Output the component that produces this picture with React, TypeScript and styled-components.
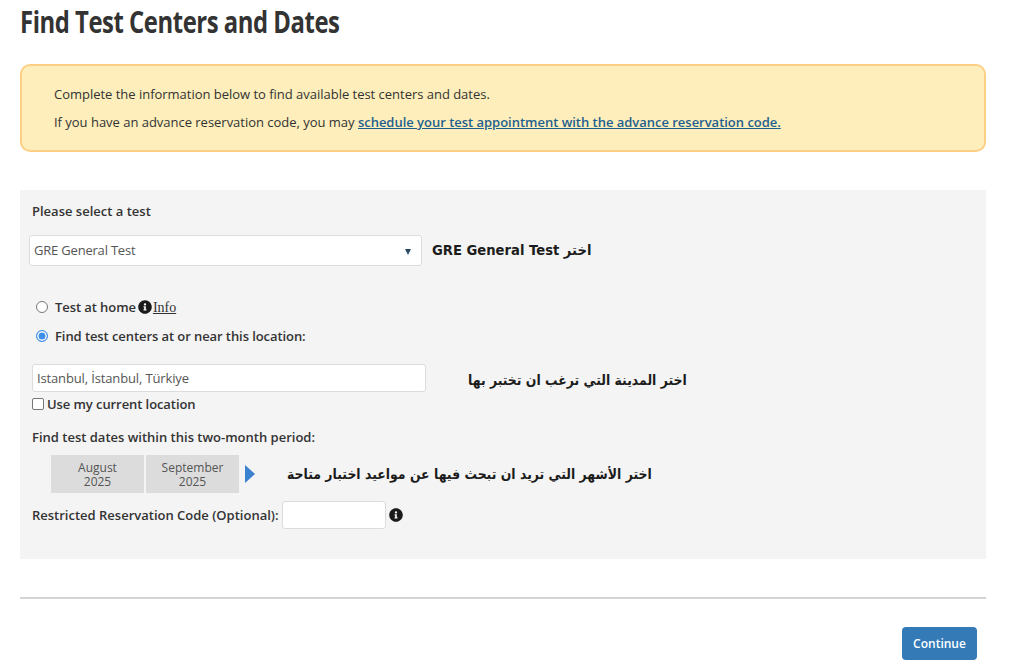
import React from "react";
import styled, { createGlobalStyle } from "styled-components";
import { FaInfoCircle } from "react-icons/fa";

const GlobalStyle = createGlobalStyle`
  html, body { margin: 0; padding: 0; background: #fff; }
  body { font-family: "Open Sans", "Noto Sans", sans-serif; color: #333; }
`;

const Page = styled.div`
  width: 966px;
  height: 667px;
  margin-left: 20px;
  overflow: hidden;
`;

const Title = styled.h1`
  margin: 0;
  height: 64px;
  box-sizing: border-box;
  font-size: 31px;
  line-height: 42px;
  font-weight: 700;
  letter-spacing: -0.6px;
  color: #333;
  transform: scaleX(0.77);
  transform-origin: left center;
  white-space: nowrap;
`;

const Notice = styled.div`
  box-sizing: border-box;
  height: 88px;
  padding: 19px 32px 0;
  background: #fdeebb;
  border: 2px solid #fdcf85;
  border-radius: 10px;
  font-size: 13px;
  line-height: 18px;
`;

const NoticeLine = styled.p`
  margin: 0 0 10px;
  letter-spacing: -0.02px;
`;

const NoticeLink = styled.a`
  color: #1f5f8f;
  font-weight: 600;
  text-decoration: underline;
`;

const Panel = styled.section`
  box-sizing: border-box;
  height: 369px;
  margin-top: 38px;
  padding: 12px 9px 0;
  background: #f4f4f4;
`;

const Label = styled.div<{ $top?: number }>`
  margin-top: ${(p) => p.$top ?? 0}px;
  padding-left: 3px;
  font-size: 13px;
  line-height: 18px;
  font-weight: 600;
  color: #333;
  white-space: nowrap;
`;

const Row = styled.div<{ $gap?: number; $top?: number }>`
  display: flex;
  align-items: center;
  gap: ${(p) => p.$gap ?? 0}px;
  margin-top: ${(p) => p.$top ?? 0}px;
`;

const SelectBox = styled.div`
  box-sizing: border-box;
  width: 393px;
  height: 31px;
  padding: 0 10px 2px 4px;
  display: flex;
  align-items: center;
  justify-content: space-between;
  background: #fff;
  border: 1px solid #dcdcdc;
  border-radius: 3px;
  font-size: 13px;
  letter-spacing: -0.2px;
  color: #555;
`;

const Caret = styled.span`
  width: 0;
  height: 0;
  margin-top: 4px;
  border-left: 3.5px solid transparent;
  border-right: 3.5px solid transparent;
  border-top: 6px solid #2b4a66;
`;

const Hint = styled.span<{ $offset?: number; $squeeze: number; $drop?: number }>`
  display: inline-block;
  margin-top: ${(p) => p.$drop ?? 0}px;
  margin-left: ${(p) => p.$offset ?? 0}px;
  font-family: "DejaVu Sans", "Noto Sans", sans-serif;
  font-size: 14px;
  font-weight: 600;
  color: #1c1c1c;
  white-space: nowrap;
  transform: scaleX(${(p) => p.$squeeze});
  transform-origin: left center;
`;

const RadioDot = styled.span<{ $on?: boolean }>`
  box-sizing: border-box;
  flex: none;
  width: 12px;
  height: 12px;
  margin-left: 7px;
  border-radius: 50%;
  background: ${(p) => (p.$on ? "#3f8fe8" : "#fff")};
  border: 1px solid ${(p) => (p.$on ? "#3f8fe8" : "#767676")};
  box-shadow: ${(p) => (p.$on ? "inset 0 0 0 1.5px #fff" : "none")};
`;

const OptionText = styled.span<{ $gap?: number }>`
  margin-left: ${(p) => p.$gap ?? 7}px;
  font-size: 13px;
  font-weight: 600;
  letter-spacing: -0.08px;
  color: #333;
`;

const InfoIcon = styled(FaInfoCircle)<{ $gap: number }>`
  flex: none;
  width: 14px;
  height: 14px;
  margin-left: ${(p) => p.$gap}px;
  color: #1a1a1a;
`;

const InfoLink = styled.a`
  margin-left: 1px;
  font-family: "Liberation Serif", serif;
  font-size: 14px;
  color: #333;
  text-decoration: underline;
  align-self: flex-end;
`;

const TextBox = styled.div<{ $width: number; $height: number; $indent?: number }>`
  box-sizing: border-box;
  width: ${(p) => p.$width}px;
  height: ${(p) => p.$height}px;
  margin-left: ${(p) => p.$indent ?? 0}px;
  padding-left: 4px;
  display: flex;
  align-items: center;
  flex: none;
  background: #fff;
  border: 1px solid #dcdcdc;
  border-radius: 3px;
  font-size: 13px;
  letter-spacing: -0.14px;
  color: #555;
`;

const CheckBox = styled.span`
  box-sizing: border-box;
  flex: none;
  width: 12px;
  height: 12px;
  margin-left: 3px;
  background: #fff;
  border: 1px solid #767676;
  border-radius: 2px;
`;

const Months = styled.div`
  display: flex;
  align-items: center;
  margin: 9px 0 0 22px;
`;

const Month = styled.div`
  box-sizing: border-box;
  width: 93px;
  height: 38px;
  margin-right: 2px;
  padding-top: 6px;
  background: #dcdcdc;
  text-align: center;
  font-size: 12px;
  line-height: 14px;
  color: #555;
`;

const MonthArrow = styled.span`
  width: 0;
  height: 0;
  margin-left: 4px;
  border-top: 9px solid transparent;
  border-bottom: 9px solid transparent;
  border-left: 10px solid #3a82d0;
`;

const Divider = styled.hr`
  margin: 38px 0 0;
  border: 0;
  border-top: 2px solid #d4d4d4;
`;

const Footer = styled.div`
  display: flex;
  justify-content: flex-end;
  padding: 28px 9px 0 0;
`;

const ContinueButton = styled.button`
  width: 75px;
  height: 33px;
  padding: 0;
  background: #337ab7;
  border: 0;
  border-radius: 4px;
  color: #fff;
  font-family: inherit;
  font-size: 12px;
  font-weight: 600;
`;

const App = () => (
  <Page>
    <GlobalStyle />
    <Title>Find Test Centers and Dates</Title>
    <Notice>
      <NoticeLine>Complete the information below to find available test centers and dates.</NoticeLine>
      <NoticeLine>
        If you have an advance reservation code, you may{" "}
        <NoticeLink>schedule your test appointment with the advance reservation code.</NoticeLink>
      </NoticeLine>
    </Notice>
    <Panel>
      <Label>Please select a test</Label>
      <Row $top={15}>
        <SelectBox>
          GRE General Test
          <Caret />
        </SelectBox>
        <Hint $offset={10} $squeeze={0.94} $drop={-2} dir="rtl">اختر GRE General Test</Hint>
      </Row>
      <Row $top={32}>
        <RadioDot />
        <OptionText>Test at home</OptionText>
        <InfoIcon $gap={2} />
        <InfoLink>Info</InfoLink>
      </Row>
      <Row $top={11}>
        <RadioDot $on />
        <OptionText>Find test centers at or near this location:</OptionText>
      </Row>
      <Row $top={19}>
        <TextBox $width={394} $height={28} $indent={3}>Istanbul, İstanbul, Türkiye</TextBox>
        <Hint $offset={42} $squeeze={0.89} $drop={4} dir="rtl">اختر المدينة التي ترغب ان تختبر بها</Hint>
      </Row>
      <Row $top={3}>
        <CheckBox />
        <OptionText $gap={3}>Use my current location</OptionText>
      </Row>
      <Label $top={15}>Find test dates within this two-month period:</Label>
      <Months>
        <Month>August<br />2025</Month>
        <Month>September<br />2025</Month>
        <MonthArrow />
        <Hint $offset={32} $squeeze={0.89} dir="rtl">اختر الأشهر التي تريد ان تبحث فيها عن مواعيد اختبار متاحة</Hint>
      </Months>
      <Row $top={8} $gap={3}>
        <Label>Restricted Reservation Code (Optional):</Label>
        <TextBox $width={104} $height={28} />
        <InfoIcon $gap={0} />
      </Row>
    </Panel>
    <Divider />
    <Footer>
      <ContinueButton>Continue</ContinueButton>
    </Footer>
  </Page>
);

export default App;
